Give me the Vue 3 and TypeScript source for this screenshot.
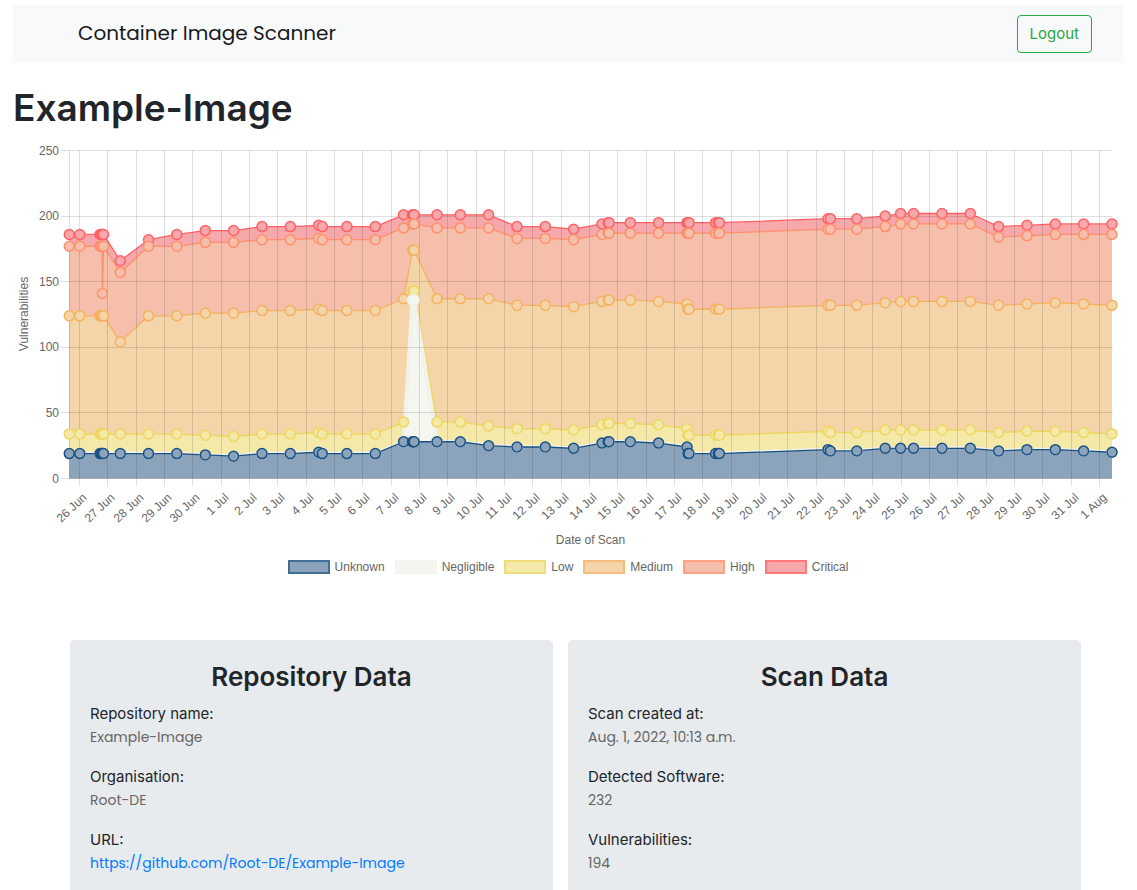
<script setup lang="ts">
interface Series {
  name: string
  fill: string
  stroke: string
  lineWidth: number
  values: number[]
}

interface Detail {
  label: string
  value: string
  href?: string
}

// Each scan: horizontal position, then cumulative counts in the order
// unknown, negligible, low, medium, high, critical.
const scans: number[][] = [
  [69.3, 19, 19, 34, 124, 177, 186],
  [79.8, 19, 19, 34, 124, 177, 186],
  [100, 19, 19, 34, 124, 177, 186],
  [101, 19, 19, 34, 124, 177, 186],
  [102, 19, 19, 34, 124, 177, 186],
  [102.4, 19, 19, 34, 124, 141, 186],
  [103.5, 19, 19, 34, 124, 177, 186],
  [120.3, 19, 19, 34, 104, 157, 166],
  [148.5, 19, 19, 34, 124, 177, 182],
  [176.8, 19, 19, 34, 124, 177, 186],
  [205.3, 18, 18, 33, 126, 180, 189],
  [233.6, 17, 17, 32, 126, 180, 189],
  [262, 19, 19, 34, 128, 182, 192],
  [290.3, 19, 19, 34, 128, 182, 192],
  [318.7, 20, 20, 35, 129, 183, 193],
  [322.3, 19, 19, 34, 128, 182, 192],
  [346.9, 19, 19, 34, 128, 182, 192],
  [375.3, 19, 19, 34, 128, 182, 192],
  [403.6, 28, 28, 43, 137, 191, 201],
  [412.6, 28, 136, 143, 174, 194, 201],
  [413.4, 28, 136, 143, 174, 194, 201],
  [414.1, 28, 136, 143, 174, 194, 201],
  [437, 28, 28, 43, 137, 191, 201],
  [460.3, 28, 28, 43, 137, 191, 201],
  [488.6, 25, 25, 40, 137, 191, 201],
  [517, 24, 24, 38, 132, 183, 192],
  [545.3, 24, 24, 38, 132, 183, 192],
  [573.6, 23, 23, 37, 131, 182, 190],
  [602, 27, 27, 41, 135, 186, 194],
  [608.2, 28, 28, 42, 136, 187, 195],
  [609, 28, 28, 42, 136, 187, 195],
  [630.3, 28, 28, 42, 136, 187, 195],
  [658.6, 27, 27, 41, 135, 187, 195],
  [687, 24, 24, 38, 133, 187, 195],
  [688, 19, 19, 33, 129, 187, 195],
  [689, 19, 19, 33, 129, 187, 195],
  [715.6, 19, 19, 33, 129, 187, 195],
  [718.4, 19, 19, 33, 129, 187, 195],
  [719.4, 19, 19, 33, 129, 187, 195],
  [828, 22, 22, 36, 132, 190, 198],
  [830.4, 21, 21, 35, 132, 190, 198],
  [856.8, 21, 21, 35, 132, 190, 198],
  [885.2, 23, 23, 37, 134, 192, 200],
  [900.6, 23, 23, 37, 135, 194, 202],
  [913.6, 23, 23, 37, 135, 194, 202],
  [942, 23, 23, 37, 135, 194, 202],
  [970.3, 23, 23, 37, 135, 194, 202],
  [998.6, 21, 21, 35, 132, 184, 192],
  [1027, 22, 22, 36, 133, 185, 193],
  [1055.3, 22, 22, 36, 134, 186, 194],
  [1083.6, 21, 21, 35, 133, 186, 194],
  [1112, 20, 20, 34, 132, 186, 194],
]

const left = 69
const right = 1112
const top = 10.5
const bottom = 338.5

const yOf = (v: number): number => bottom - (v * (bottom - top)) / 250

const styles: [string, string, string, number][] = [
  ['Unknown', '#8ba4bc', '#1a5180', 1.3],
  ['Negligible', '#f5f6f0', '#f1f2ec', 4],
  ['Low', '#f5e9a9', '#edd662', 1.5],
  ['Medium', '#f4d4a9', '#f4b261', 1.3],
  ['High', '#f5bfab', '#ff906b', 1.3],
  ['Critical', '#f6a8ab', '#ff6166', 1.3],
]

const series: Series[] = styles.map(([name, fill, stroke, lineWidth], i) => ({
  name,
  fill,
  stroke,
  lineWidth,
  values: scans.map((s) => s[i + 1]),
}))

// The tallest stack is painted first so that each lower one covers it.
const layers: Series[] = [...series].reverse()

const linePoints = (s: Series): string =>
  s.values.map((v, i) => `${scans[i][0]},${yOf(v).toFixed(2)}`).join(' ')

const areaPoints = (s: Series): string =>
  `${scans[0][0]},${bottom} ${linePoints(s)} ${right},${bottom}`

const yTicks: number[] = [0, 50, 100, 150, 200, 250]

const dayName = (i: number): string => {
  if (i < 5) return `${26 + i} Jun`
  if (i < 36) return `${i - 4} Jul`
  return '1 Aug'
}

const xTicks = Array.from({ length: 37 }, (_, i) => ({
  x: Math.floor(79.6 + (i * 1020) / 36) + 0.5,
  label: dayName(i),
}))

const repository: Detail[] = [
  { label: 'Repository name:', value: 'Example-Image' },
  { label: 'Organisation:', value: 'Root-DE' },
  {
    label: 'URL:',
    value: 'https://github.com/Root-DE/Example-Image',
    href: 'https://github.com/Root-DE/Example-Image',
  },
]

const scan: Detail[] = [
  { label: 'Scan created at:', value: 'Aug. 1, 2022, 10:13 a.m.' },
  { label: 'Detected Software:', value: '232' },
  { label: 'Vulnerabilities:', value: '194' },
]
</script>

<template>
  <div class="page">
    <header class="navbar">
      <a class="brand" href="#">Container Image Scanner</a>
      <button class="logout" type="button">Logout</button>
    </header>

    <main>
      <h1>Example-Image</h1>

      <section class="chart">
        <svg viewBox="13 0 1110 412" role="img" aria-label="Vulnerabilities by date of scan">
          <g v-for="s in layers" :key="s.name">
            <polygon :points="areaPoints(s)" :fill="s.fill" />
            <polyline
              :points="linePoints(s)"
              :stroke="s.stroke"
              :stroke-width="s.lineWidth"
              stroke-linejoin="bevel"
              fill="none"
            />
          </g>
          <g class="grid">
            <line v-for="v in yTicks" :key="v" x1="61" :x2="right" :y1="Math.floor(yOf(v)) + 0.5" :y2="Math.floor(yOf(v)) + 0.5" />
            <line :x1="left + 0.5" :x2="left + 0.5" :y1="top" :y2="bottom" />
            <line v-for="t in xTicks" :key="t.label" :x1="t.x" :x2="t.x" :y1="top" :y2="bottom + 8" />
          </g>
          <g v-for="s in layers" :key="s.name" :fill="s.fill" :stroke="s.stroke" class="points">
            <circle v-for="(v, i) in s.values" :key="i" :cx="scans[i][0]" :cy="yOf(v)" r="5" />
          </g>
          <g class="labels">
            <text v-for="v in yTicks" :key="v" x="59" :y="yOf(v) + 4" text-anchor="end">{{ v }}</text>
            <text
              v-for="t in xTicks"
              :key="t.label"
              :transform="`translate(${t.x + 8} ${bottom + 20}) rotate(-43)`"
              text-anchor="end"
            >{{ t.label }}</text>
            <text transform="translate(28 174) rotate(-90)" text-anchor="middle">Vulnerabilities</text>
            <text x="590.5" y="404" text-anchor="middle">Date of Scan</text>
          </g>
        </svg>
        <ul class="legend">
          <li v-for="s in series" :key="s.name">
            <svg class="swatch" viewBox="0 0 42 14" aria-hidden="true">
              <rect width="42" height="14" :fill="s.fill" />
              <rect x="1" y="1" width="40" height="12" fill="none" :stroke="s.stroke" stroke-width="2" stroke-opacity="0.65" />
            </svg>
            {{ s.name }}
          </li>
        </ul>
      </section>

      <div class="cards">
        <section class="card">
          <h2>Repository Data</h2>
          <dl>
            <div v-for="d in repository" :key="d.label" class="detail">
              <dt>{{ d.label }}</dt>
              <dd>
                <a v-if="d.href" :href="d.href">{{ d.value }}</a>
                <template v-else>{{ d.value }}</template>
              </dd>
            </div>
          </dl>
        </section>
        <section class="card scan">
          <h2>Scan Data</h2>
          <dl>
            <div v-for="d in scan" :key="d.label" class="detail">
              <dt>{{ d.label }}</dt>
              <dd>{{ d.value }}</dd>
            </div>
          </dl>
        </section>
      </div>
    </main>
  </div>
</template>

<style>
html,
body {
  background: #fff;
  overflow: hidden;
}
</style>

<style scoped>
.page {
  padding: 5px 14px 0 13px;
  color: #212529;
  font-family: Inter, 'Liberation Sans', sans-serif;
  font-size: 15px;
  line-height: 24px;
}

.navbar {
  display: flex;
  align-items: center;
  justify-content: space-between;
  padding: 10px 31px 10px 65px;
  background: #f8f9fb;
}

.brand {
  padding-bottom: 2px;
  color: #18191b;
  font-family: Poppins, Inter, sans-serif;
  font-size: 20px;
  text-decoration: none;
}

.logout {
  height: 38px;
  padding: 0 12px;
  border: 1px solid #28a745;
  border-radius: 4px;
  background: transparent;
  color: #28a745;
  font: inherit;
}

h1 {
  margin: 21px 0 8px;
  font-size: 37px;
  font-weight: 600;
  line-height: 48px;
}

.chart svg {
  display: block;
  width: 100%;
}

.points {
  stroke-width: 1.5;
}

.grid line {
  stroke: rgba(0, 0, 0, 0.12);
}

.labels text {
  fill: #666;
  font-family: 'Liberation Sans', Arial, sans-serif;
  font-size: 12px;
}

.legend {
  display: flex;
  justify-content: center;
  gap: 10px;
  margin: 8px 0 0;
  padding: 0;
  list-style: none;
  color: #666;
  font-family: 'Liberation Sans', Arial, sans-serif;
  font-size: 12px;
  line-height: 14px;
}

.legend li {
  display: flex;
  gap: 5px;
}

.legend .swatch {
  width: 42px;
  height: 14px;
}

.cards {
  display: grid;
  grid-template-columns: 483fr 513fr;
  gap: 15px;
  margin: 66px 42px 0 57px;
}

.card {
  padding: 20px;
  border-radius: 5px;
  background: #e8ebee;
}

h2 {
  margin: 0 0 8px;
  font-size: 26px;
  font-weight: 600;
  line-height: 34px;
  text-align: center;
}

dl {
  margin: 0;
}

.detail {
  margin-bottom: 17px;
}

dt {
  line-height: 24px;
}

dd {
  margin: 0;
  color: #666;
  font-family: Poppins, Inter, sans-serif;
  font-size: 14px;
  line-height: 22px;
}

dd a {
  color: #007bff;
  text-decoration: none;
}
</style>
